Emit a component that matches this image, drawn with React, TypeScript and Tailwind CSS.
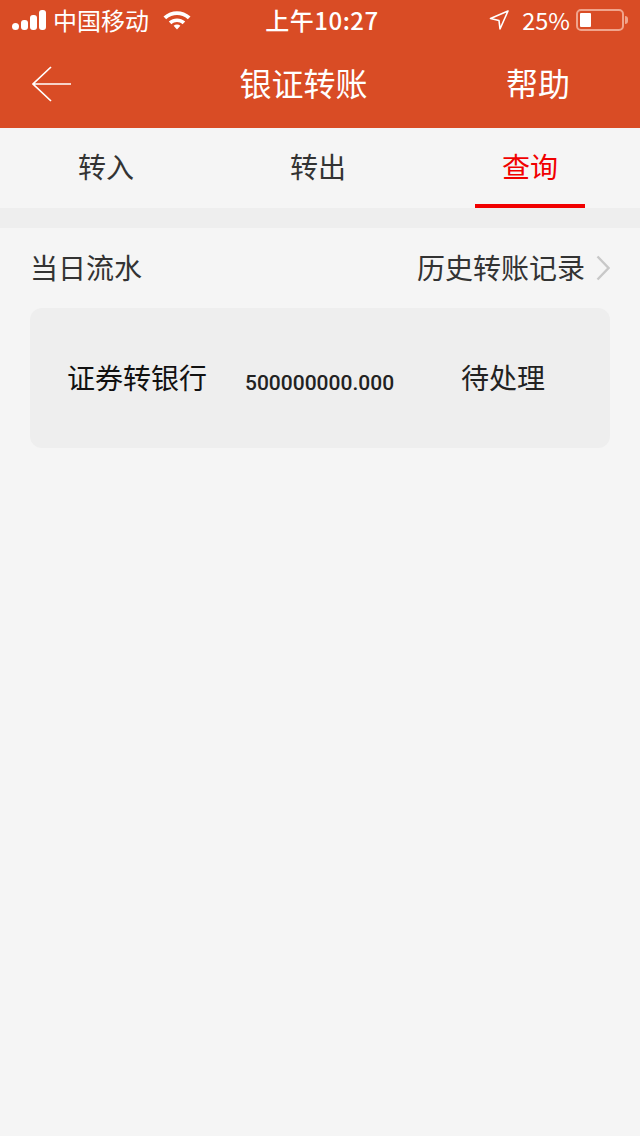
const cjk = "font-['Noto_Sans_CJK_SC','Noto_Sans',sans-serif]";

// ── Status bar pieces ──────────────────────────────────────────────────────────
function Signal() {
  return (
    <div className="flex items-end gap-[2px] mr-[7px] mb-[1px]">
      <div className="w-[7px] h-[7px] rounded-full bg-white" />
      <div className="w-[7px] h-[10px] rounded-[3px] bg-white" />
      <div className="w-[7px] h-[15px] rounded-[3px] bg-white" />
      <div className="w-[7px] h-[20px] rounded-[3px] bg-white" />
    </div>
  );
}

function Wifi() {
  return (
    <svg width="28" height="20" viewBox="0 0 28 20" className="ml-[14px]">
      <path d="M0.5 6.5 C8.5 -0.5 19.5 -0.5 27.5 6.5 L24.8 9.2 C18.5 3.6 9.5 3.6 3.2 9.2 Z" fill="#fff" />
      <path d="M5.8 11.6 C10.5 7.5 17.5 7.5 22.2 11.6 L19.6 14.2 C16.5 11.4 11.5 11.4 8.4 14.2 Z" fill="#fff" />
      <path d="M10.6 15.8 C12.6 14.2 15.4 14.2 17.4 15.8 L14 19.5 Z" fill="#fff" />
    </svg>
  );
}

function Battery() {
  return (
    <div className="flex items-center ml-[6px]">
      <div className="w-[48px] h-[22px] rounded-[5px] border-2 border-[#f0a48c] p-[2px]">
        <div className="w-[11px] h-full rounded-[1px] bg-white" />
      </div>
      <div className="w-[3px] h-[8px] rounded-r-[3px] bg-[#f0a48c] ml-[1px]" />
    </div>
  );
}

export default function App() {
  return (
    <div className={`w-[640px] h-[1136px] bg-[#f5f5f5] flex flex-col overflow-hidden ${cjk}`}>
      {/* Header */}
      <div className="h-[128px] bg-[#d94c25] text-white flex flex-col">
        <div className="h-[40px] px-[12px] grid grid-cols-[1fr_auto_1fr] items-center">
          <div className="flex items-center">
            <Signal />
            <span className="text-[24px] leading-[40px]">中国移动</span>
            <Wifi />
          </div>
          <span className="text-[24px] leading-[40px] font-medium tracking-[0.5px] ml-[4px]">上午10:27</span>
          <div className="flex items-center justify-end">
            <svg width="20" height="20" viewBox="0 0 20 20" className="mr-[13px]">
              <path d="M19 1 L1.5 8.5 L10 10.5 L11 19 Z" fill="none" stroke="#fff" strokeWidth="1.6" strokeLinejoin="round" />
            </svg>
            <span className="text-[23.5px] leading-[40px]">25%</span>
            <Battery />
          </div>
        </div>
        <div className="h-[88px] pl-[32px] pr-[70px] flex items-center justify-between">
          <svg width="40" height="36" viewBox="0 0 40 36">
            <path d="M19 1 L1 18 L19 35 M1 18 L39 18" fill="none" stroke="#fff" strokeWidth="1.7" />
          </svg>
          <span className="text-[32px] leading-[40px] ml-[29px] mb-[4px]">银证转账</span>
          <span className="text-[32px] leading-[40px] mb-[4px]">帮助</span>
        </div>
      </div>

      {/* Tabs */}
      <div className="h-[80px] grid grid-cols-[212px_212px_216px] text-[28px] text-[#333]">
        <div className="flex justify-center pt-[18px] leading-[40px]">转入</div>
        <div className="flex justify-center pt-[18px] leading-[40px]">转出</div>
        <div className="flex flex-col items-center pt-[18px]">
          <span className="leading-[40px] text-[#f10000] mr-[4px]">查询</span>
          <div className="w-[110px] h-[4px] mt-[18px] mr-[4px] bg-[#f10000]" />
        </div>
      </div>
      <div className="h-[20px] bg-[#eeeeee]" />

      {/* Section title */}
      <div className="h-[80px] px-[30px] flex items-center justify-between text-[28px] text-[#333]">
        <span className="mb-[2px]">当日流水</span>
        <div className="flex items-center">
          <span className="mb-[2px]">历史转账记录</span>
          <svg width="14" height="26" viewBox="0 0 14 26" className="ml-[11px]">
            <path d="M1.5 1.5 L12.5 13 L1.5 24.5" fill="none" stroke="#c8c8c8" strokeWidth="2.4" />
          </svg>
        </div>
      </div>

      {/* Record */}
      <div className="mx-[30px] h-[140px] rounded-[12px] bg-[#eeeeee] grid grid-cols-[200px_180px_1fr] items-center">
        <span className="text-[28px] text-[#111] pl-[37px] pb-[2px] whitespace-nowrap">证券转银行</span>
        <span className="text-[21px] font-medium text-[#222] font-['Roboto',sans-serif] pt-[12px] pl-[15px] whitespace-nowrap">500000000.000</span>
        <span className="text-[28px] text-[#222] pl-[51px] pb-[2px] whitespace-nowrap">待处理</span>
      </div>
    </div>
  );
}
